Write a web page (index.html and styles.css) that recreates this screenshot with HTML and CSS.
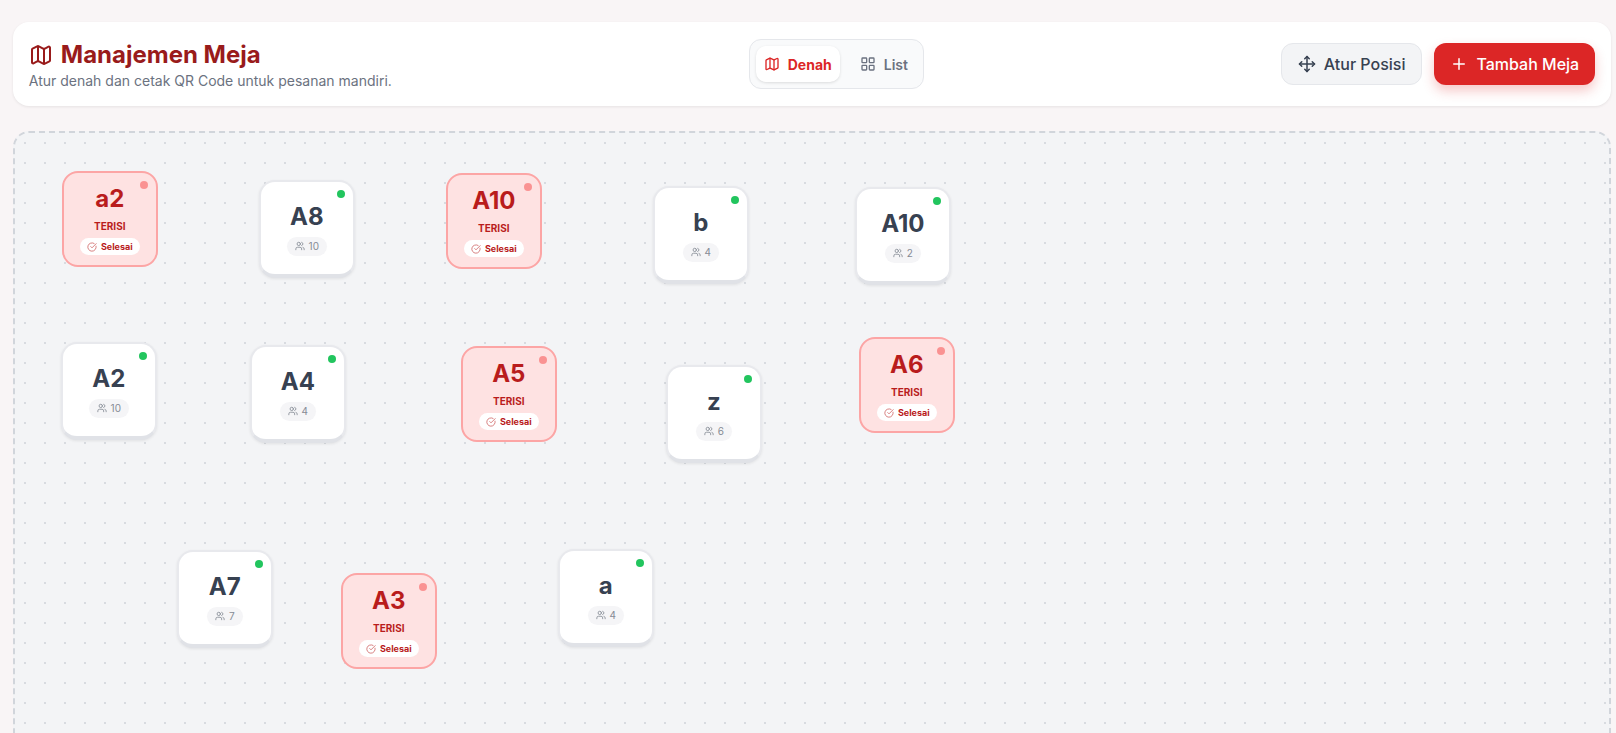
FILE: index.html
```html
<!DOCTYPE html>
<html lang="en">
<head>
    <meta charset="UTF-8">
    <meta name="viewport" content="width=device-width, initial-scale=1.0">
    <title>Manajemen Meja</title>
    <link rel="stylesheet" href="styles.css">
</head>
<body>

    <!-- Icon set -->
    <svg class="icon-defs" xmlns="http://www.w3.org/2000/svg">
        <symbol id="i-map" viewBox="0 0 24 24"><path d="M14.106 5.553a2 2 0 0 0 1.788 0l3.659-1.83A1 1 0 0 1 21 4.619v12.764a1 1 0 0 1-.553.894l-4.553 2.277a2 2 0 0 1-1.788 0l-4.212-2.106a2 2 0 0 0-1.788 0l-3.659 1.83A1 1 0 0 1 3 19.381V6.618a1 1 0 0 1 .553-.894l4.553-2.277a2 2 0 0 1 1.788 0z"/><path d="M15 5.764v15"/><path d="M9 3.236v15"/></symbol>
        <symbol id="i-grid" viewBox="0 0 24 24"><rect x="3" y="3" width="7" height="7" rx="1"/><rect x="14" y="3" width="7" height="7" rx="1"/><rect x="14" y="14" width="7" height="7" rx="1"/><rect x="3" y="14" width="7" height="7" rx="1"/></symbol>
        <symbol id="i-move" viewBox="0 0 24 24"><path d="M12 2v20"/><path d="m15 19-3 3-3-3"/><path d="m19 9 3 3-3 3"/><path d="M2 12h20"/><path d="m5 9-3 3 3 3"/><path d="m9 5 3-3 3 3"/></symbol>
        <symbol id="i-plus" viewBox="0 0 24 24"><path d="M5 12h14"/><path d="M12 5v14"/></symbol>
        <symbol id="i-users" viewBox="0 0 24 24"><path d="M16 21v-2a4 4 0 0 0-4-4H6a4 4 0 0 0-4 4v2"/><circle cx="9" cy="7" r="4"/><path d="M22 21v-2a4 4 0 0 0-3-3.87"/><path d="M16 3.13a4 4 0 0 1 0 7.75"/></symbol>
        <symbol id="i-check" viewBox="0 0 24 24"><path d="M21.801 10A10 10 0 1 1 17 3.335"/><path d="m9 11 3 3L22 4"/></symbol>
    </svg>

    <div class="page">

        <header class="topbar">
            <div class="topbar-title">
                <h1><svg class="icon icon-title"><use href="#i-map"/></svg>Manajemen Meja</h1>
                <p>Atur denah dan cetak QR Code untuk pesanan mandiri.</p>
            </div>

            <div class="view-switch">
                <button type="button" class="view-btn active"><svg class="icon icon-view"><use href="#i-map"/></svg>Denah</button>
                <button type="button" class="view-btn"><svg class="icon icon-view"><use href="#i-grid"/></svg>List</button>
            </div>

            <div class="topbar-actions">
                <button type="button" class="btn btn-light"><svg class="icon icon-btn"><use href="#i-move"/></svg>Atur Posisi</button>
                <button type="button" class="btn btn-red"><svg class="icon icon-btn"><use href="#i-plus"/></svg>Tambah Meja</button>
            </div>
        </header>

        <!-- Floor plan: each table keeps its saved x/y -->
        <main class="floor">
            <div class="table busy" style="left: 47px; top: 38px;"><span class="dot"></span><div class="name">a2</div><div class="state">TERISI</div><div class="done"><svg class="icon icon-done"><use href="#i-check"/></svg>Selesai</div></div>
            <div class="table" style="left: 244px; top: 47px;"><span class="dot"></span><div class="name">A8</div><div class="seats"><svg class="icon icon-seat"><use href="#i-users"/></svg>10</div></div>
            <div class="table busy" style="left: 431px; top: 40px;"><span class="dot"></span><div class="name">A10</div><div class="state">TERISI</div><div class="done"><svg class="icon icon-done"><use href="#i-check"/></svg>Selesai</div></div>
            <div class="table" style="left: 638px; top: 53px;"><span class="dot"></span><div class="name">b</div><div class="seats"><svg class="icon icon-seat"><use href="#i-users"/></svg>4</div></div>
            <div class="table" style="left: 840px; top: 54px;"><span class="dot"></span><div class="name">A10</div><div class="seats"><svg class="icon icon-seat"><use href="#i-users"/></svg>2</div></div>

            <div class="table" style="left: 46px; top: 209px;"><span class="dot"></span><div class="name">A2</div><div class="seats"><svg class="icon icon-seat"><use href="#i-users"/></svg>10</div></div>
            <div class="table" style="left: 235px; top: 212px;"><span class="dot"></span><div class="name">A4</div><div class="seats"><svg class="icon icon-seat"><use href="#i-users"/></svg>4</div></div>
            <div class="table busy" style="left: 446px; top: 213px;"><span class="dot"></span><div class="name">A5</div><div class="state">TERISI</div><div class="done"><svg class="icon icon-done"><use href="#i-check"/></svg>Selesai</div></div>
            <div class="table" style="left: 651px; top: 232px;"><span class="dot"></span><div class="name">z</div><div class="seats"><svg class="icon icon-seat"><use href="#i-users"/></svg>6</div></div>
            <div class="table busy" style="left: 844px; top: 204px;"><span class="dot"></span><div class="name">A6</div><div class="state">TERISI</div><div class="done"><svg class="icon icon-done"><use href="#i-check"/></svg>Selesai</div></div>

            <div class="table" style="left: 162px; top: 417px;"><span class="dot"></span><div class="name">A7</div><div class="seats"><svg class="icon icon-seat"><use href="#i-users"/></svg>7</div></div>
            <div class="table busy" style="left: 326px; top: 440px;"><span class="dot"></span><div class="name">A3</div><div class="state">TERISI</div><div class="done"><svg class="icon icon-done"><use href="#i-check"/></svg>Selesai</div></div>
            <div class="table" style="left: 543px; top: 416px;"><span class="dot"></span><div class="name">a</div><div class="seats"><svg class="icon icon-seat"><use href="#i-users"/></svg>4</div></div>
        </main>

    </div>

</body>
</html>
```

FILE: styles.css
```css
* {
    box-sizing: border-box;
}

html, body {
    height: 100%;
    overflow: hidden;
}

body {
    margin: 0;
    font-family: 'Inter', sans-serif;
    background: #f9f5f6;
    color: #374151;
}

.icon-defs {
    display: none;
}

.icon {
    fill: none;
    stroke: currentColor;
    stroke-width: 2;
    stroke-linecap: round;
    stroke-linejoin: round;
    flex-shrink: 0;
}

.page {
    padding: 22px 4.8px 0 12.8px;
    display: flex;
    flex-direction: column;
    gap: 25px;
}

/* top bar */
.topbar {
    height: 84px;
    padding: 0 16px;
    background: white;
    border-radius: 16px;
    box-shadow: 0 1px 3px rgba(0, 0, 0, 0.08);
    display: flex;
    justify-content: space-between;
    align-items: center;
}

.topbar-title {
    padding-top: 2px;
}

.topbar h1 {
    margin: 0;
    font-size: 24px;
    line-height: 30px;
    font-weight: 700;
    color: #991b1b;
    display: flex;
    align-items: center;
    gap: 8px;
}

.icon-title {
    width: 24px;
    height: 24px;
}

.topbar p {
    margin: 2px 0 0;
    font-size: 14px;
    line-height: 18px;
    color: #6b7280;
}

.view-switch {
    padding: 6px 7px 6px 6px;
    height: 50px;
    background: #f9fafb;
    border: 1px solid #e5e7eb;
    border-radius: 12px;
    display: flex;
    gap: 12px;
}

.view-btn {
    padding: 0 8px;
    border: none;
    border-radius: 10px;
    background: none;
    font-family: inherit;
    font-size: 14px;
    font-weight: 600;
    color: #6b7280;
    display: flex;
    align-items: center;
    gap: 8px;
}

.view-btn.active {
    background: white;
    color: #dc2626;
    font-weight: 700;
    box-shadow: 0 1px 3px rgba(0, 0, 0, 0.12);
}

.icon-view {
    width: 16px;
    height: 16px;
}

.topbar-actions {
    display: flex;
    gap: 12px;
}

.btn {
    height: 42px;
    padding: 0 16px;
    border-radius: 12px;
    font-family: inherit;
    font-size: 16px;
    font-weight: 500;
    display: flex;
    align-items: center;
    gap: 8px;
}

.btn-light {
    background: #f3f4f6;
    border: 1px solid #e5e7eb;
    color: #374151;
}

.btn-red {
    background: #dc2626;
    border: none;
    color: white;
    box-shadow: 0 6px 12px rgba(220, 38, 38, 0.25);
}

.icon-btn {
    width: 18px;
    height: 18px;
}

/* floor plan */
.floor {
    position: relative;
    height: 640px;
    background-color: #f3f4f6;
    background-image: radial-gradient(#d8dbe0 1px, transparent 1px);
    background-size: 20px 20px;
    border: 2px dashed #d1d5db;
    border-radius: 16px;
}

.table {
    position: absolute;
    width: 96px;
    height: 98px;
    background: white;
    border: 2px solid #e8e9ed;
    border-bottom: 4px solid #e0e2e7;
    border-radius: 16px;
    box-shadow: 0 1px 3px rgba(0, 0, 0, 0.08);
    display: flex;
    flex-direction: column;
    align-items: center;
    justify-content: center;
}

.table.busy {
    height: 96px;
    background: #fee2e2;
    border: 2px solid #fca5a5;
    box-shadow: none;
}

.dot {
    position: absolute;
    top: 8px;
    right: 8px;
    width: 8px;
    height: 8px;
    border-radius: 50%;
    background: #22c55e;
}

.busy .dot {
    background: #f87171;
    opacity: 0.7;
}

.name {
    font-size: 24px;
    line-height: 32px;
    font-weight: 700;
    color: #374151;
}

.busy .name {
    color: #b91c1c;
}

.seats {
    margin-top: 4px;
    padding: 1px 8px;
    background: #f5f5f7;
    border-radius: 999px;
    font-size: 10px;
    line-height: 17px;
    color: #868b95;
    display: flex;
    align-items: center;
    gap: 4px;
}

.icon-seat {
    width: 10px;
    height: 10px;
}

.state {
    margin-top: 5px;
    font-size: 10px;
    line-height: 12px;
    font-weight: 700;
    color: #b91c1c;
}

.done {
    margin-top: 6px;
    padding: 1px 7px;
    background: white;
    border-radius: 999px;
    font-size: 9px;
    line-height: 15px;
    font-weight: 700;
    color: #b91c1c;
    display: flex;
    align-items: center;
    gap: 4px;
}

.icon-done {
    width: 10px;
    height: 10px;
    opacity: 0.65;
}
```
